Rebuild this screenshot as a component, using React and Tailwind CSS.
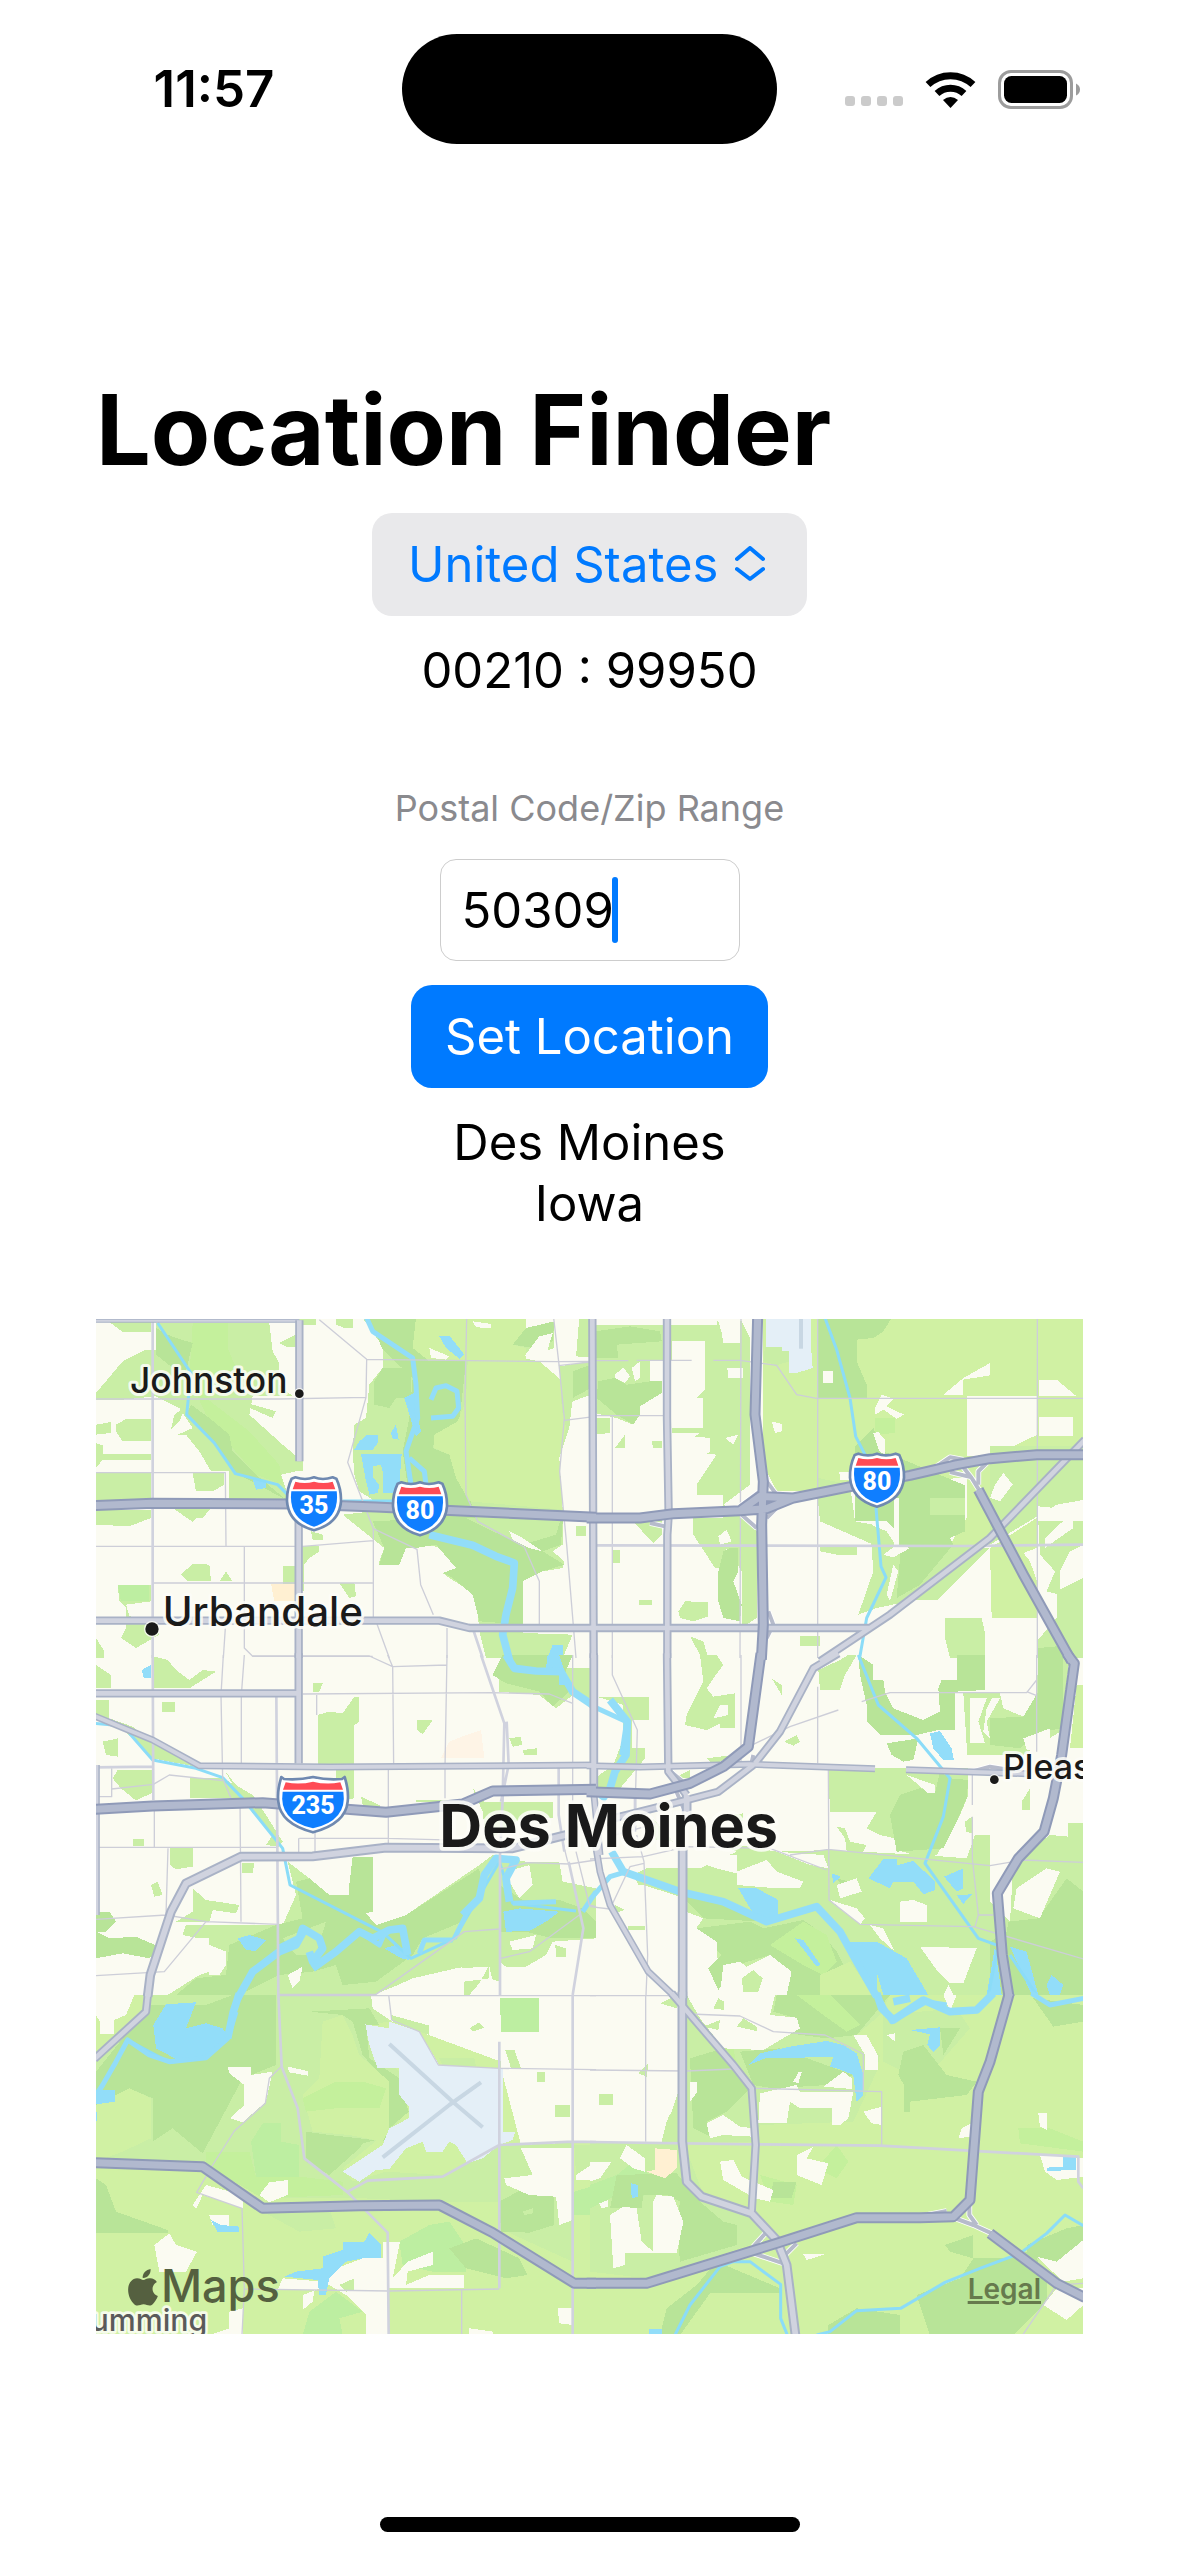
const TILES = [
  {
    x: 0, y: 0,
    areas: [
      ["mid", "M180 15H520L530 100L550 135V200L590 235H470L460 290L560 380L620 430V460H600L555 470L580 545H400V460H345L310 400L270 350H245L290 330L250 270L180 235L80 245H0V225L80 130L150 95H180Z"],
      ["bright", "M290 15H395V90L420 150L330 240L460 340L550 440L560 500L480 470L400 380L330 290L280 180Z"],
      ["dark", "M180 30L215 50L240 60L290 75L270 160L230 150L180 110Z"],
      ["dark", "M285 260L340 300L400 350L410 400L480 470L570 545L560 540L420 465L355 375L272 290Z"],
      ["mid", "M0 320L45 312V345L0 350ZM60 320L90 303H165V370H80L60 340ZM0 375L20 382V408H165V425H20L0 450ZM0 465H165V545H0ZM0 575H165V600L100 625L0 620ZM290 465H385V500L350 520H300ZM230 570H345L320 600H300L290 612ZM40 12H165V42H80ZM720 0H770V30H745L720 20ZM550 75L600 50V88H575ZM435 250L540 280L530 300L450 265ZM225 335L235 290L270 265L250 310Z"],
      ["mid", "M620 685H670V700L640 720L625 740V820L560 800V745H600V690ZM255 770L290 737L340 740L345 790H275ZM370 790L390 760L410 790ZM65 800H165V850L90 860L100 895L155 900L190 950L120 990L75 960L90 930V870L70 850ZM0 960L25 1000V1020H0ZM730 795H775L780 835L760 840ZM645 640L680 650V665H650Z"],
      ["teal", "M65 800H160V850H75Z"],
      ["mid", "M860 85L800 0H1130L1180 30H1375V90L1280 120L1330 130L1400 190L1430 240L1420 330L1390 420L1400 580V680L1370 700L1405 730L1400 750L1340 760L1280 790V1020H1170L1150 940L1140 830L1060 780L1040 765L1080 750L1040 690L990 680L960 690H930L910 740H850V730L865 690L790 630L740 590L830 580V545L790 520L775 470L770 400L775 320L810 300L820 200L860 150Z"],
      ["dark", "M820 0H960V80L1010 120L1110 130L1090 310L1020 350L1010 390L1060 410L1090 490L1120 540L1145 610H1400L1395 680L1340 700L1405 740L1340 760L1280 790V920L1150 910L1130 830L1070 780L1040 765L1080 750L1020 680L960 690H930L910 740H850L865 690L830 610L1040 600L940 540L920 400L940 300L950 180L860 95Z"],
      ["dark", "M860 150H945V240L900 240L880 270L835 260V190Z"],
      ["mid", "M1110 600H1395L1380 650L1280 680L1190 640Z"],
      ["yellow", "M1115 130H1330L1400 190L1395 250L1410 330L1390 420L1400 575L1120 550L1080 480L1060 410L1015 390V350L1085 310L1110 250Z"],
      ["yellow", "M960 0H1290V30L1250 80L1290 90V130H1000L950 90Z"],
      ["dark", "M1290 30L1375 10L1370 70L1310 90L1250 80Z"],
      ["mid", "M1450 0H1500V120L1440 115ZM1390 145L1485 130V230L1430 250L1400 290ZM1440 625H1470V655H1440ZM1280 945L1430 950L1400 1020H1280ZM600 0H660V20H620Z"],
      ["dark", "M1430 160L1485 140V210L1430 240Z"],
      ["land", "M1130 10L1185 18V30L1140 28ZM1330 55L1370 45L1350 110L1335 120L1285 115ZM1000 90L1060 115L1050 125L1005 120ZM1240 640L1280 660L1340 700L1300 690L1250 665Z"],
      ["sand", "M525 797H600V895L590 850L535 850Z"],
      ["water", "M1030 55H1062L1105 110L1090 122L1050 90ZM775 395L790 370L812 352H845V375L830 395ZM795 408H917L910 500L890 525H862V470L855 440L832 445V480L850 500L845 525L820 530L810 490ZM885 345L900 320L908 365L890 362ZM925 240L955 225L965 300L975 340L960 355ZM470 485L510 490V510L480 515ZM1355 1020L1370 980H1400V1010L1390 1020Z"],
    ],
    creeks: "M185 15L285 165L272 290L355 375L418 467L545 500L580 535M740 549H900",
    rivers: "M812 0L830 40L950 120L960 200L965 300L930 400L945 500M940 420L985 460L990 500M1005 245L1020 210L1050 203L1083 220L1088 270L1070 295L1005 300",
    wide: "M1000 650L1130 682L1200 715L1255 735L1250 810L1230 890L1220 950L1240 1025",
    minor: "M0 243H550L810 238M670 5L812 124L1385 131L1500 130M1373 0L1388 131L1405 300L1391 460L1412 680L1440 1020M812 124L810 238L755 433L832 632V900M832 632L963 694L974 800L1012 890M1112 0L1107 240L1110 530L1145 610L1285 687L1330 790V920M1405 307L1500 295M0 464H388L390 685M0 685H620L832 668M170 795H832M445 685V990L470 1015H830M840 910L880 1020M1053 930V1020M388 930L382 1020M1387 143L1500 130",
    secondary: "M170 0V1020M1130 930L1160 1020",
    arterial: "M610 7V430M608 600V1020M0 908H1030L1120 930H1500",
    thin: "M0 8H610",
    motorway: "M-10 563L170 556L600 558L840 567L1110 580L1500 598",
  },
  {
    x: 1482, y: 0,
    areas: [
      ["mid", "M15 20H380V10H455L480 60V500L400 560L440 580L500 640V900L455 930V760L410 690L400 750H375L310 650V600H400V530H320V500L380 410L300 400L295 370L330 345H245V330H340V240H320L345 215V70H245V130H215V200L150 265V290L130 320L80 300L15 285Z"],
      ["mid", "M15 300H60V345L15 350ZM75 390L105 350V390ZM110 590H215V650L190 675ZM285 850L355 852V895L310 910L270 900L265 880ZM630 955H690V983H630ZM147 847H185V860H147ZM70 697H90V735H70ZM185 370H215V390H190ZM300 955L340 970L355 1020H335Z"],
      ["dark", "M15 40L120 25L210 40L215 70L80 80L85 120H15ZM25 190L75 180L110 200L180 190H215V225L150 265V290L130 320L80 290L20 240ZM420 690H445V760L430 790L455 860L450 910L400 900L385 850V760L400 700Z"],
      ["land", "M385 10H450V75H400L395 45ZM75 170L100 148L120 175L105 195L75 180ZM180 130H215V190H180ZM125 150L150 130V180L135 190ZM295 370L310 355L360 360V400L330 425L300 400ZM412 150L458 150V180H415ZM405 360L445 350L430 380ZM385 655L410 635L425 670L390 680Z"],
      ["yellow", "M520 0H1485V385H1200V680H1080L1130 600V480L850 490V520H560L520 440Z"],
      ["mid", "M525 88H598V130L560 142L520 130ZM1200 385H1485V545L1400 560L1200 680Z"],
      ["dark", "M685 0H905L880 40L850 60L800 65V130L830 200V240H685Z"],
      ["mid", "M685 480L780 500L795 610L850 620V680L690 610L685 560ZM690 685H800V710H740L690 700ZM840 620L890 640L930 700L950 750L1080 680L1200 690L1045 845H980L860 870L805 890L850 760Z"],
      ["dark", "M795 385L850 330L880 400L1120 500H1125V640L1080 660L1090 680L1040 740L990 800L920 840L930 720L920 640L890 610H795Z"],
      ["mid", "M1020 540H1125V592H1020Z"],
      ["bright", "M855 300H915V345L855 350Z"],
      ["yellow", "M1200 690L1340 600V900H1205Z"],
      ["mid", "M1345 610H1485V1020H1340V970L1400 900V820L1480 780V680L1440 700L1410 760V830L1370 820L1395 760L1350 710ZM1065 900H1175L1185 945V1020H1080L1065 960Z"],
      ["dark", "M1345 990L1400 985L1440 1020H1345Z"],
      ["land", "M1130 235H1342V350L1270 385H1200V410L1130 415ZM1060 230L1120 180L1200 135V172L1120 185V232ZM1347 185L1400 185L1460 235H1347ZM1347 297H1450V353H1347ZM700 158L730 160V195H700ZM545 310L575 318V340L555 345ZM855 270L875 230L910 242L890 265L942 290L920 302L880 275L855 290ZM850 345L865 342L885 365V410L868 400ZM1215 500L1240 465L1268 500L1230 550L1200 540ZM912 540H928V680H912ZM920 680L960 690L910 718L880 710ZM910 740L925 760L900 850L890 830ZM748 462H780V485H750ZM1345 565L1395 570L1345 605ZM1365 660L1445 585L1450 630L1400 665L1365 690ZM1300 705L1340 690L1345 800L1320 730Z"],
      ["airport", "M527 0H663V85L668 150L620 165H598V100H575V88H527Z"],
    ],
    runway: "M633 0V92",
    creeks: "M705 0L740 95L780 240L797 355L825 410M858 570L873 745L888 778L830 900L808 1025",
    minor: "M453 0L450 1020M683 0V1020M1342 0V1020M67 295V1020M0 293H220M0 128H115M140 127H305M370 127H450L560 142L620 230L680 241H1485",
    secondary: "M0 682L1120 684L1485 680",
    links: "M1110 435L1145 480L1170 520M1040 445L1080 418L1120 425M1080 462L1145 478M1165 500V460L1190 435M455 590L500 630M530 490L560 530M530 600L560 570M450 565L510 520M180 615L225 625M535 880L550 920L530 960",
    arterial: "M7 -5L11 1020M231 0V300L236 590L232 650V1020M0 930H840M690 1030L900 890L1200 660L1485 365",
    motorway: "M-10 600H150L250 587L450 578L530 572L610 540L800 502L960 472L1100 440L1200 422L1340 410H1490M450 578L510 535L610 540M503 -5L495 290L520 490L515 620L520 920L514 1025M1165 515L1300 770L1445 1030",
  },
  {
    x: 0, y: 1011,
    areas: [
      ["mid", "M0 30L45 60V100H0ZM0 135H40V190L20 205L0 190ZM175 5L215 15L240 45L280 75L320 45L360 50L280 100H175ZM198 142H237V170H198ZM665 180L700 170L740 175L775 125H790V200L775 210V430L720 440V345H665ZM65 345H175V410L120 437L75 400L50 370ZM282 368H380L430 400L435 430H282ZM40 190L110 215L170 260L260 300L300 335L170 310L110 250ZM222 580H290V635L240 643L222 630ZM110 552H143V573H110ZM438 625H475L470 655H438ZM963 195H1010L980 238L963 225ZM20 260L66 250V305L30 300ZM385 345L420 390L470 420L510 480L560 560L550 575L510 570L530 540L440 440ZM650 85H680L670 110H650ZM1240 250L1275 245L1278 270L1250 275ZM1280 285L1322 280V300H1285ZM795 425L850 450L870 480L800 450Z"],
      ["peach", "M1035 310L1060 260L1110 240L1155 225L1165 310Z"],
      ["mid", "M1130 400L1165 440L1370 440V490L1290 480L1170 560L1160 470ZM1060 440H960V435H1060ZM290 700L330 735L430 750L420 775L350 765L340 800H240L290 770ZM165 690L185 680L200 720L175 725Z"],
      ["mid", "M270 810H560L600 720L575 620L640 670L700 720H760L770 690V605H830V770L810 775L840 810L930 780L1150 630L1190 600L1290 620L1390 620L1400 680L1500 700V850L1370 860L1350 900L1290 935H1230L1210 920L1080 940L950 970L840 1020H215L310 960L340 950V850H310L260 840Z"],
      ["dark", "M600 680L640 670L700 720L760 720V690L770 605H830V770L810 775L840 810L930 780L1150 640L1155 700L1100 800L980 850L950 900L840 980L740 990L720 930L650 950L550 960L430 1020H240L300 970L390 960L400 870L540 810L620 790Z"],
      ["mid", "M550 1020L560 960L640 960L720 940L740 990L840 990L830 1020ZM560 850L690 800L660 900L600 900Z"],
      ["dark", "M0 830L40 850L120 845L200 880L160 910L80 895L0 910ZM0 770L40 770L60 800L30 830H0ZM1210 690L1280 735H1390L1460 760L1500 800V850H1370L1290 830H1215Z"],
      ["mid", "M1050 900L1210 890V980L1100 940Z"],
      ["land", "M575 960L620 935L610 980L590 1000ZM1240 860L1320 840L1310 880L1250 885ZM1230 650L1300 630L1310 690L1270 730L1240 680ZM830 1020L920 985L1060 960L1080 940L1180 935L1200 1020ZM340 870L390 890V930L370 960H340ZM0 920H130L160 960V1020H0Z"],
      ["mid", "M1105 980L1180 970V930L1150 985L1120 1020H1105ZM1210 40H1485V130L1430 120L1380 160L1330 120L1210 110ZM1378 870L1410 880V905H1380Z"],
      ["dark", "M1190 60L1220 0H1430L1400 70L1420 110L1370 155L1330 110L1230 85Z"],
      ["water", "M425 850L460 840L510 855L480 888L450 885ZM1222 770L1270 760L1390 770L1350 800L1300 828L1230 830ZM137 45L165 30V68H143ZM1355 0H1390L1420 90H1390V40L1350 40ZM865 880L900 870L940 890V915L915 910Z"],
    ],
    creeks: "M-5 205L50 210M100 235L170 315L300 340L380 368L440 430L560 580L582 690L860 832L945 910L1075 850L1210 620L1250 745L1440 768",
    rivers: "M1460 770L1500 710M1070 855H985L970 895M1110 780L1075 850M790 830L850 870L870 825M1250 745L1380 740",
    wide: "M425 1030L470 950L550 890L600 870L625 825M550 880L610 850L620 820L670 850L680 880L650 920L640 890M650 940L720 890L790 830L830 850L880 825L920 820L935 900M1100 780L1150 730L1165 660L1200 610L1260 615L1230 670L1240 740M1230 0L1255 40L1320 48L1395 50L1430 110L1490 150",
    minor: "M470 3H820L890 35L1053 30M875 0L890 35L893 335M382 0L375 120L380 370L405 430M445 0L436 120V330M1053 0L1047 335V430M662 120V180M620 117L1190 113L1360 117L1430 145M1430 0V440M47 340V425H0M47 402L172 388L220 360L380 377M432 430L435 800M175 440V575M0 577H540M610 550H875L1100 556M608 600V550M657 520V600M877 345V570M216 580L210 780L0 793M210 780L330 800L548 808M330 800L205 950L0 962M1215 642L1295 623L1420 627L1500 615M548 1018H840L1105 830L1210 822M1215 910L1300 890L1450 780M1415 620L1400 560M1440 590L1480 750L1500 755",
    secondary: "M170 0L172 435M541 120L547 1020M1155 0L1225 205L1220 430L1212 600V1020M1232 200L1238 330L1215 440M0 337L170 335M1388 335V480L1405 590M1418 620L1462 820L1430 1020",
    arterial: "M0 115H608M608 -5V325M1494 0V400",
    mid: "M-5 183L170 255L310 332L700 336L1500 330M1 330V780",
    wideArterial: "M155 1025L163 960L225 770L270 685L435 605L650 604L870 578L1250 580L1410 540",
    motorway: "M-10 463L170 453L500 443L870 472L1100 447L1190 408L1500 403",
  },
  {
    x: 1482, y: 1011,
    areas: [
      ["mid", "M20 125H177V195H125V280H165V310L90 400L40 440L0 380L70 330L100 250V150ZM290 180L340 80L330 0H380L400 30L370 70L350 100L370 125L435 115V220H390V205L350 225L285 210ZM545 70L575 90V120ZM583 260L620 240L630 260L610 272ZM685 45L750 15L775 0H800L765 60L750 105H690ZM250 370L300 345V370ZM350 310L430 300L370 330Z"],
      ["dark", "M805 0L850 30V75H880L885 110L910 160L1000 195L1050 170L1045 100L1055 75H1100V0H1185V105L1095 110V225L1045 225L980 240H870L830 200V150L810 60ZM890 265L985 250L970 315L940 320L905 300Z"],
      ["land", "M390 150H415V180L370 190Z"],
      ["mid", "M1120 115H1230L1240 160L1300 185L1340 120L1345 0H1440L1410 230L1300 300L1130 300V270Z"],
      ["dark", "M1200 190L1300 185L1345 110V0H1420V220L1350 230L1290 280L1200 270Z"],
      ["land", "M1140 130H1190L1165 200L1185 265H1140ZM1205 130H1230L1190 200L1200 250L1180 230L1190 160ZM1300 250L1380 220V250L1340 290L1310 285Z"],
      ["yellow", "M1460 90H1480V280H1440Z"],
      ["mid", "M715 340H960V470H720ZM850 340H1135V420L1110 480L1040 600L1010 610L920 585L915 550L870 540L830 520L860 470ZM1125 500L1145 485V535L1128 530ZM1295 440L1320 400V465H1295ZM740 515L765 520L780 560L830 570L820 590L770 590L765 550Z"],
      ["dark", "M930 420L990 400L1035 415L1050 350L1080 370L1135 375L1130 430L1100 500L1060 580L920 590L900 480Z"],
      ["land", "M950 360L1035 390V415L1015 415Z"],
      ["mid", "M370 560L480 575L560 590L720 585L1000 600L1130 610L1155 540H1200V740L1260 800L1270 620L1380 540L1435 545V505H1480V1020H590L290 860L340 790L160 720L130 660L170 640H330L440 590ZM425 480L460 475V500ZM190 490L250 560L195 555ZM75 750L105 765L75 775ZM115 812H165V825H115Z"],
      ["dark", "M320 820L480 800L520 820L640 795L690 830L740 890L760 930L690 1020H590L600 950L540 900L440 930L385 1005L355 940L395 900ZM260 710L400 740L520 800L340 790ZM740 670L780 680L765 705Z"],
      ["bright", "M540 870L640 800L710 840L740 920L700 960L640 930Z"],
      ["yellow", "M690 960L780 920L850 1020H690Z"],
      ["dark", "M1255 800L1345 790L1430 670L1480 710V1020H1200V860L1250 830Z"],
      ["land", "M310 600L440 600V655L380 640L320 620ZM440 650L530 615L560 650L640 680L630 700L560 700L440 690ZM560 590L700 600L715 640L660 630ZM930 740L970 735L1010 750V800L930 800ZM990 875L1160 880L1120 985H1080L1040 945ZM840 810L880 820L915 890L870 850ZM740 690L800 670L815 710L750 730ZM720 735L800 760L825 790L810 808ZM400 930L450 920L470 935L540 900L605 950L590 1020H390ZM1280 700L1370 640L1410 650L1350 790L1270 760ZM1060 1020L1075 990L1090 1020ZM60 680L160 690L270 725L290 800L380 860V910L355 940L370 1020H290L270 1000H180L120 930Z"],
      ["mid", "M455 970L490 945L518 970L505 1010H460ZM115 812H165V825H115ZM75 750L105 765L75 775Z"],
      ["water", "M445 700H500L565 735V785L520 800L480 760ZM835 670L880 612H920V632L970 617L1035 680V705L1000 718L970 680H910L900 700ZM1020 235L1050 228L1085 280L1092 315H1060L1030 280ZM1062 665L1120 640V700L1100 710ZM1100 720L1145 718L1120 747ZM725 655L752 665L730 685ZM770 860H860L950 910L1015 1020H880L860 950L860 1020L800 920ZM615 850L640 855L692 930L680 935ZM1215 875L1235 1020H1190ZM1260 875L1310 890L1345 1020H1325ZM1370 990L1385 960L1420 990L1410 1020H1380Z"],
    ],
    creeks: "M805 0L865 150L980 250L1080 370L1060 485L1005 625L1165 850L1225 872M1225 872L1195 1020M1260 900L1340 1020",
    rivers: "M-5 740L60 665L110 650M0 150L110 200L95 300",
    wide: "M65 590L100 650L270 710L400 740L530 800L680 755L750 830L800 920L860 1025M60 135L112 200L108 300L75 350L60 400L35 435",
    minor: "M67 0V60L142 225L137 400V460M453 0V320M683 95V325M490 268L600 215L745 165M815 140L900 113H1310L1340 75M1310 110L1340 122M1340 0V290M715 340L717 735L810 808L1150 815L1480 912M0 612L160 605L290 575L540 580L710 645M600 600L715 583L1200 632L1300 615L1480 622M1147 360V450M1147 485V610L1165 780H1210M1165 780L1155 815M140 540L162 620L173 900L168 1020M0 755L60 762L120 635L162 625M75 540L200 505",
    secondary: "M135 400V530",
    links: "M230 340L285 385M255 400L285 470M490 300L480 345M1145 350L1200 335L1260 345",
    arterial: "M11 -5V400M231 -5L235 350L290 420M745 -5L670 40L570 230L495 325M490 330L385 410L290 435L70 490",
    mid: "M-10 332L150 336L480 328L855 341M948 344L1310 356M15 560L30 650L60 750L175 950L260 1030M10 400L30 600",
    wideArterial: "M278 580V1030M290 420V500",
    motorway: "M-10 410L180 417L300 385L400 335L475 275L513 -5M1430 -5L1453 25L1415 300L1390 430L1362 530L1285 610L1222 715L1237 900L1257 1025",
  },
  {
    x: 0, y: 2031,
    areas: [
      ["yellow", "M0 0H1500V1020H0Z"],
      ["mid", "M165 0H830L850 45L880 80L810 90L820 150L910 230V380L740 520L770 560L870 530L1040 540L1210 450V620L1030 620L800 610H500L320 500H0V300L0 200L100 100ZM1210 450L1430 440V800L1210 700ZM480 620L700 640L720 700L610 710L500 650Z"],
      ["dark", "M160 30L0 230V330L100 280L170 310V440L230 400L320 475L360 400L440 250L540 210V0H410L330 30ZM640 50L820 40L850 90L810 90L820 190L910 250L938 350L880 400L860 430L800 445L790 460L700 540L630 500V410L700 420L790 430L870 440V260L800 180L770 80L740 60ZM0 550L30 570L60 650L215 705V715H0Z"],
      ["yellow", "M0 330L100 280L165 310V430L80 470L0 500ZM680 80L740 60L770 120L790 180L880 260V400L860 440L760 420L650 410L620 300L670 250Z"],
      ["teal", "M465 440L500 385H555V440L610 450V545H480ZM910 740L1000 690L1060 680L1100 740L1110 830L1010 830L920 810Z"],
      ["bright", "M620 310L720 260H800L870 280L850 340H720L630 350ZM330 470H460L480 545H610L740 560L740 600L500 610L330 510Z"],
      ["dark", "M1060 760L1140 730L1270 790L1295 840L1230 850L1110 820ZM1210 620L1320 560L1375 605V690L1300 713L1215 710Z"],
      ["land", "M0 0H115L90 60L55 75V118H12V80L0 60ZM825 0H1500V440L1275 450L1215 220V200L890 80L830 40Z"],
      ["teal", "M1212 10H1330V110H1215ZM1435 590L1500 570V660H1435ZM720 890L800 950L730 970L740 1020H620L640 950Z"],
      ["mid", "M1435 450H1500V500L1440 540ZM1120 100L1150 82L1165 98L1130 110ZM1228 165H1255L1275 220H1245ZM1323 232H1347V260H1323ZM1377 330H1422V365H1377ZM1030 190H1135L1140 213H1040ZM885 60L1000 92V120L970 110L890 80Z"],
      ["land", "M395 215H465V240L530 230L510 320L440 382L402 370L445 330V270L400 235ZM575 215L635 228V242L580 232ZM1225 550L1310 540L1275 460H1430V675L1390 690L1380 605L1300 600L1230 570ZM1440 540L1500 500V555H1440ZM490 600L520 562L575 555V600L520 622ZM330 570L440 600V640L320 600L300 642L290 630ZM340 660H400V695L350 690ZM175 750L220 715L240 750L303 770L270 830H190ZM860 740H912L890 850L935 800L1010 770V810L935 830L930 870L1000 840H1103V880H880V1020H810V960L750 900L700 870L620 900V945L650 920L655 885H545L560 850L680 860L720 820L800 790H860ZM400 950L440 940V1020H340L400 1000ZM1385 940H1430V990L1390 985ZM1120 1000L1190 1010V1020H1120Z"],
      ["mid", "M730 870L775 850V885L750 890ZM1280 650L1310 640V655L1285 660Z"],
      ["airport", "M808 88L880 100V80L970 110L1030 210L1220 220V410H1258L1250 435L1210 450L1160 490L1115 505L1080 450L1060 440L1040 470H990L980 440L930 460L880 522L840 525L790 560L740 530L860 450L880 400L938 370V335L910 300V220H845L820 150Z"],
      ["water", "M172 90L210 28L300 22L270 100L330 85L380 100L400 130L330 190L240 192L180 160ZM0 285H57V320L0 328ZM0 350H4V378H0ZM345 675L375 690L430 695V712H365ZM805 740L820 713L855 750V790H800L750 800L700 850L690 900L670 900L665 855L565 845L600 830L680 820V785L740 765V740Z"],
    ],
    runway: "M880 147L1070 320L1160 397M1155 262L1060 330L860 487",
    creeks: "M95 135L220 202L325 190",
    rivers: "M420 50L395 130L330 188L220 200L160 180L95 135L60 200L20 270L0 300",
    wide: "M430 -5L412 50L395 130",
    minor: "M548 2H1500M878 0L887 75L970 110L1027 210L1210 220L1500 224M555 215L520 250L508 325L415 408L350 510L302 592L438 640L445 880L438 1020M445 882L880 888L1210 882M1097 882V1020",
    secondary: "M547 0L557 215L605 340L625 490L755 592L875 713L878 1020M755 590L815 557L1040 545L1210 450L1430 440L1500 441M1210 140V880M1430 0V1020",
    arterial: "M156 -5L150 50L-5 192",
    motorway: "M-10 503L320 515L500 640L790 632L1030 630L1190 713L1435 865H1500",
  },
  {
    x: 1482, y: 2031,
    areas: [
      ["yellow", "M0 0H1485V1020H0Z"],
      ["mid", "M290 0H900L870 60L800 120L870 180L860 230L790 380L510 390L500 440H260L240 380ZM0 440H280L340 600L480 650L540 720L480 750L170 850L0 830ZM880 60L1100 40L1140 100L1000 260L880 200Z"],
      ["dark", "M560 0H900L850 60L800 120L710 130L560 110L620 70L550 50ZM300 190L400 160L460 240L480 280L410 350L350 380L370 430L310 400ZM450 170L570 160L790 240L710 270L550 280L490 270ZM940 170L1000 150L1070 240L1160 260L1130 300L960 320V350H942V270L925 240ZM1050 100L1110 100L1060 180ZM1330 10L1480 30V80L1390 95Z"],
      ["bright", "M620 0H720L810 90L770 110L700 60ZM390 130L430 160L440 210L400 180ZM1285 400L1380 400L1480 440V470L1290 445ZM680 520L740 450L775 500L740 550ZM510 540L620 570L610 630L540 620Z"],
      ["teal", "M0 570L80 540L130 500L180 540V600L60 610L0 640Z"],
      ["dark", "M80 540L260 535L330 620L400 680L440 690V750L270 800L260 680L270 620L230 600H160L155 640H60ZM550 560H620L605 610H540ZM380 800L570 880V895L360 895L270 1020H210L230 940L320 870ZM1065 750L1150 720V790H1260L1310 770V750L1430 700L1480 690V740L1400 800L1340 790L1370 860V920L1270 1020H1020L980 900L1110 850L1150 790L1080 770ZM715 990L800 940L930 960V1020H715Z"],
      ["land", "M0 0H275V260L215 440H0ZM290 0H555L540 60L620 68L630 100L520 165L400 160L330 70ZM510 295L620 270L630 290H790L775 370L750 390H725V340H630L600 320L590 385H505ZM700 275L760 230L785 250V282ZM610 260L625 232H635L625 265ZM790 120H830L863 180V225H825V180ZM300 260H322V290L300 320ZM350 385L400 360L450 395L490 400V425L400 420L360 430ZM620 480L670 455L650 490L715 505L695 570L620 540ZM90 490L110 450L165 490V530L130 520ZM0 500H65L30 550L0 560ZM390 500L430 495L455 545L550 585L540 620L495 610L400 555ZM820 350L875 335V390L845 385ZM1115 400L1145 385L1140 425L1105 430ZM1345 355H1370V405L1350 395ZM1350 480L1480 490V545L1400 555L1365 530ZM1340 785L1400 800L1480 735V850L1420 860ZM1360 930L1400 880H1480V930L1430 975ZM640 778H705L650 795ZM60 660L100 635L140 640L155 740L190 770V620L200 600L250 605L280 680L260 775H105V810L70 820ZM890 120L915 115V140ZM1060 0H1100L1080 50ZM28 625L55 615V635L35 640Z"],
      ["mid", "M210 25L260 0V40ZM370 40L385 10L403 20V45ZM340 95L390 75L385 105ZM440 95L460 70L500 95V108ZM145 235L175 205L170 245ZM27 298H68V330H27ZM230 380L240 355L255 365L270 410V440H215Z"],
      ["sand", "M195 460L260 465V520L225 550L170 530L195 525Z"],
      ["water", "M475 210L510 175L600 155L710 138L760 150L800 175L820 240V300L800 322L790 240L740 220L720 215L730 185L690 185L600 190L530 188ZM960 105L1050 97V150L1030 172L1012 150L1020 118ZM1420 487H1458V525L1370 528V518L1420 515ZM123 565L143 570V605L125 610ZM178 1003H215V1020H178Z"],
    ],
    creeks: "M255 1020L300 930L390 815L430 800H480L572 868V970L592 1020M680 1020L720 1010L800 947L932 940L1065 862L1170 820L1290 775L1370 715L1425 660L1480 692",
    rivers: "M1325 -5L1380 30L1480 10M860 -5L905 80L1010 20L1070 30",
    wide: "M860 -5L875 40L910 75L1000 15L1080 50L1160 45L1210 -5M910 20L960 10",
    minor: "M0 2H250M167 0V440M0 225L290 228L430 222M300 57L450 63L550 110L705 120L820 177V285M495 280L875 290V450M1298 1020L1400 870L1480 865",
    secondary: "M0 441L500 448L870 452L1465 485V560L1480 580",
    links: "M1090 668L1150 690L1205 715M1138 615V660L1160 690M1010 660L1070 648M490 755L540 700M490 775L580 805M620 745L580 785",
    arterial: "M245 -5L430 210L485 280L497 450L485 650",
    wideArterial: "M277 -10V440L290 560L335 605L485 655L560 735L590 810L617 1025",
    motorway: "M-10 865H170L560 745L800 668H990L1090 665L1140 615L1165 290L1200 200L1258 -5M1200 715L1400 865L1485 908",
  },
];

const AREA_COLORS = {
  land: "#fbfbf2",
  mid: "#c9eea5",
  yellow: "#d0f1a3",
  bright: "#c4f09c",
  teal: "#bdeea1",
  dark: "#b8e498",
  sand: "#fff0d2",
  peach: "#fef4e6",
  airport: "#e4eff7",
  water: "#92ddf9",
};

const LINE_LAYERS = [
  ["runway", "#c8d7e3", 12],
  ["creeks", "#8bdcf8", 9],
  ["rivers", "#92ddf9", 15],
  ["wide", "#92ddf9", 23],
  ["minor", "#cdced8", 4],
  ["secondary", "#d0d2de", 8],
  ["thin", "#a9b2c6", 12],
  ["thin", "#d0d3df", 6],
  ["links", "#ffffff", 17],
  ["links", "#b6bbcb", 12],
  ["mid", "#a9b2c6", 21],
  ["arterial", "#a9b2c6", 25],
  ["wideArterial", "#a9b2c6", 29],
  ["mid", "#d0d3df", 12],
  ["arterial", "#d0d3df", 14],
  ["wideArterial", "#d0d3df", 17],
  ["motorway", "#8f9ab8", 33],
  ["motorway", "#b1b9ce", 21],
];

const PLACES = [
  { name: "Johnston", x: 102, y: 225, size: 106, dot: [610, 227, 13] },
  { name: "Urbandale", x: 200, y: 923, size: 121, dot: [168, 933, 20] },
  { name: "Pleas", x: 2721, y: 1383, size: 102, dot: [2695, 1385, 13] },
];

function Shield({ x, y, wide, label }) {
  const outline = wide
    ? "M-87 -76Q-43 -72 0 -82Q43 -72 87 -76L95 -82Q108 -40 104 -8Q98 58 0 84Q-98 58 -104 -8Q-108 -40 -95 -82Z"
    : "M-56 -80Q-26 -70 0 -80Q26 -70 56 -80L67 -76Q82 -44 81 -8Q76 58 0 79Q-76 58 -81 -8Q-82 -44 -67 -76Z";
  const body = wide
    ? "M-91 -38H91Q104 48 0 72Q-104 48 -91 -38Z"
    : "M-68 -38H68Q78 44 0 68Q-78 44 -68 -38Z";
  const crown = wide
    ? "M-90 -44L-82 -66Q-40 -58 0 -68Q40 -58 82 -66L90 -44Z"
    : "M-64 -44L-56 -67Q-28 -59 0 -67Q28 -59 56 -67L64 -44Z";
  return (
    <g transform={`translate(${x} ${y})`}>
      <path d={outline} fill="#fff" stroke="#6f89b0" strokeWidth="8" strokeLinejoin="round" />
      <path d={body} fill="#0f7eff" />
      <path d={crown} fill="#ff4b55" />
      <text y="29" textAnchor="middle" fontSize="75" fontWeight="800" fill="#fff" fontFamily='Roboto, "Noto Sans", sans-serif'>
        {label}
      </text>
    </g>
  );
}

function MapDrawing() {
  return (
    <svg viewBox="0 3 2961 3045" className="block w-full" role="img" aria-label="Map of Des Moines, Iowa">
      <rect width="2961" height="3051" fill="#fbfbf2" />
      {TILES.map((t) => (
        <g key={`${t.x}-${t.y}`} transform={`translate(${t.x} ${t.y})`} shapeRendering="crispEdges">
          {t.areas.map(([kind, d], i) => (
            <path key={i} d={d} fill={AREA_COLORS[kind]} />
          ))}
        </g>
      ))}
      {LINE_LAYERS.map(([kind, color, width], i) => (
        <g key={i} fill="none" stroke={color} strokeWidth={width} strokeLinejoin="round">
          {TILES.filter((t) => t[kind]).map((t) => (
            <path key={`${t.x}-${t.y}`} d={t[kind]} transform={`translate(${t.x} ${t.y})`} />
          ))}
        </g>
      ))}
      <Shield x={654} y={558} label="35" />
      <Shield x={972} y={573} label="80" />
      <Shield x={2343} y={487} label="80" />
      <Shield x={651} y={1459} label="235" wide />
      <g fontFamily="Inter, sans-serif" fill="#1a1a1a" stroke="#fdfdf8" strokeOpacity="0.85" paintOrder="stroke" strokeLinejoin="round">
        {PLACES.map((p) => (
          <g key={p.name}>
            <circle cx={p.dot[0]} cy={p.dot[1]} r={p.dot[2]} strokeWidth="8" />
            <text x={p.x} y={p.y} fontSize={p.size} fontWeight="500" strokeWidth="18">
              {p.name}
            </text>
          </g>
        ))}
        <text x="1538" y="1588" textAnchor="middle" fontSize="178" fontWeight="700" strokeWidth="22">
          Des Moines
        </text>
        <text x="334" y="3038" textAnchor="end" fontSize="91" fontWeight="500" fill="#5a5a5a" strokeWidth="16">
          umming
        </text>
      </g>
    </svg>
  );
}

function AppleLogo() {
  return (
    <svg viewBox="0 0 90 112" className="h-[37px] w-[30px]" fill="currentColor" aria-hidden="true">
      <path d="M68 0C69 16 58 28 44 27C43 13 54 2 68 0Z" />
      <path d="M87 39C75 46 72 57 75 67C77 74 83 79 90 82C87 91 81 100 75 106C66 115 58 108 47 107C36 108 29 114 20 108C8 99 0 80 0 63C0 43 11 29 27 28C36 28 41 33 46 33C51 33 57 27 67 28C75 28 82 32 87 39Z" />
    </svg>
  );
}

function StatusBar() {
  return (
    <header className="grid grid-cols-[1fr_375px_1fr] items-center pt-[34px]">
      <time className="pl-[26px] text-center text-[51px]/[60px] font-semibold">11:57</time>
      <div className="h-[110px] rounded-full bg-black" />
      <div className="flex items-center justify-center gap-[22px] pr-8">
        <div className="flex gap-[6px] pt-[24px]">
          {[0, 1, 2, 3].map((i) => (
            <span key={i} className="h-[10px] w-[10px] rounded-[3px] bg-[#cbcbcb]" />
          ))}
        </div>
        <svg viewBox="0 0 51 37" className="h-[37px] w-[51px]" aria-label="Wi-Fi">
          <g fill="none" stroke="#000" strokeWidth="7">
            <path d="M3 13.5A33 33 0 0 1 48 13.5" />
            <path d="M12 22.500A20 20 0 0 1 39 22.500" />
          </g>
          <path d="M25.500 37L18 29Q25.500 23 33 29Z" />
        </svg>
        <svg viewBox="0 0 82 39" className="h-[39px] w-[82px]" aria-label="Battery">
          <rect x="1.500" y="1.500" width="72" height="36" rx="11.500" fill="none" stroke="#9c9c9c" strokeWidth="3" />
          <rect x="6" y="6" width="63" height="27" rx="7.500" />
          <path d="M78 13.500Q82 15.500 82 19.500T78 25.500Z" fill="#9c9c9c" />
        </svg>
      </div>
    </header>
  );
}

export default function App() {
  return (
    <div className="flex min-h-screen flex-col bg-white font-[Inter,sans-serif] text-black">
      <StatusBar />
      <main className="flex flex-col px-24 pt-[224px]">
        <h1 className="text-[97px]/[124px] font-bold">Location Finder</h1>
        <form className="mt-[21px] flex flex-col items-center" onSubmit={(e) => e.preventDefault()}>
          <div className="relative">
            <select
              aria-label="Country"
              className="block h-[103px] w-[435px] appearance-none rounded-[20px] bg-[#e9e9eb] pl-[36px] text-[49px] text-[#007aff] outline-none"
            >
              <option>United States</option>
            </select>
            <svg
              viewBox="0 0 30 36"
              className="pointer-events-none absolute top-[33px] right-[42px] h-[36px] w-[30px]"
              fill="none"
              stroke="#007aff"
              strokeWidth="4"
              strokeLinecap="round"
              strokeLinejoin="round"
              aria-hidden="true"
            >
              <path d="M2 13L15 2L28 13M2 23L15 33L28 23" />
            </svg>
          </div>
          <p className="mt-6 text-[49px]/[61px]">00210 : 99950</p>
          <label htmlFor="postal" className="mt-[82px] text-[36px]/[50px] text-[#8a8a8e]">
            Postal Code/Zip Range
          </label>
          <div className="relative mt-[26px]">
            <input
              id="postal"
              type="text"
              inputMode="numeric"
              defaultValue="50309"
              className="block h-[102px] w-[300px] rounded-[16px] border border-[#cdcdcd] bg-white px-[21px] text-[49px] outline-none"
            />
            <span className="absolute top-[18px] left-[172px] h-[66px] w-[6px] rounded-full bg-[#007aff]" />
          </div>
          <button type="submit" className="mt-6 h-[103px] w-[357px] rounded-[21px] bg-[#007aff] text-[49px] text-white">
            Set Location
          </button>
          <output className="mt-6 block text-center text-[49px]/[61px]">
            Des Moines
            <br />
            Iowa
          </output>
        </form>
        <section className="relative mt-[85px] overflow-hidden" aria-label="Map">
          <MapDrawing />
          <div className="absolute bottom-[28px] left-[32px] flex items-end text-[#556040]">
            <AppleLogo />
            <span className="pl-[3px] text-[45px]/[40px] font-medium">Maps</span>
          </div>
          <a href="#legal" className="absolute right-[42px] bottom-[29px] text-[28px]/[32px] font-semibold text-[#667a4d] underline decoration-[3px]">
            Legal
          </a>
        </section>
      </main>
      <div className="mt-auto mb-6 h-[15px] w-[420px] self-center rounded-full bg-black" />
    </div>
  );
}
